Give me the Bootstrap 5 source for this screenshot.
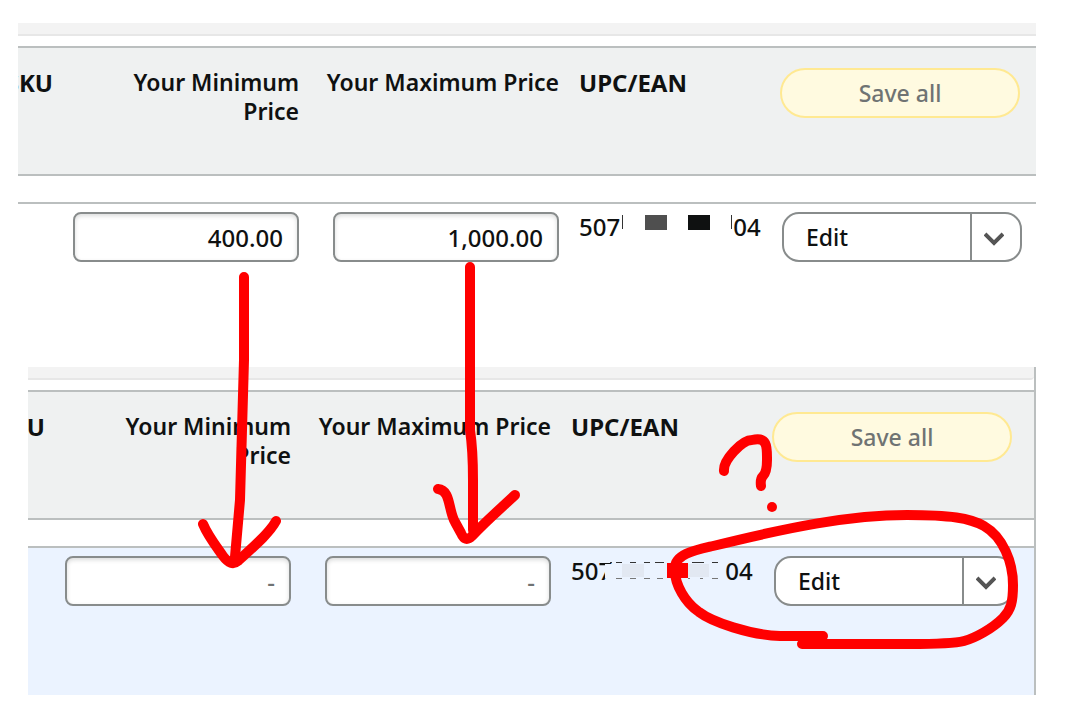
<!DOCTYPE html>
<html lang="en">
<head>
<meta charset="utf-8">
<meta name="viewport" content="width=device-width, initial-scale=1">
<title>Inventory prices</title>
<link href="https://cdn.jsdelivr.net/npm/bootstrap@5.3.0/dist/css/bootstrap.min.css" rel="stylesheet">
<style>
body { background: #fff; color: #0f1111; font-family: "Noto Sans", sans-serif; font-size: 24px; line-height: 29px; }
.stage { padding: 23px 38px 24px 18px; }
.panel-b { margin-left: 10px; border-right: 2px solid #bbbfbf; }
.strip { height: 13px; margin-bottom: 10px; background: #f3f3f3; border-bottom: 2px solid #e7e7e7; }
.panel-b .strip { border-bottom-right-radius: 4px; }
.grid-table { width: 100%; table-layout: fixed; border-collapse: separate; border-spacing: 0; }
.grid-table th, .grid-table td { padding: 8px 10px 0; vertical-align: top; }
.grid-table thead th { height: 130px; padding-top: 20px; background: #eff1f1; border: solid #bbbfbf; border-width: 2px 0; font-weight: 700; }
.grid-table thead th.text-end { font-size: 23px; font-weight: 650; }
.grid-table .spacer td { height: 28px; padding: 0; border-bottom: 2px solid #bbbfbf; }
.panel-a .entry td { height: 163px; }
.panel-b .entry td { height: 147px; background: #ebf3ff; }
.c-min { width: 246px; } .c-max { width: 260px; } .c-upc { width: 203px; }
.panel-a .c-sku { width: 45px; } .panel-b .c-sku { width: 27px; }
.grid-table th:first-child { padding-left: 0; }
.grid-table th:last-child { padding-left: 8px; }
.panel-a th:last-child { padding-right: 16px; } .panel-a td:last-child { padding-right: 14px; }
.panel-b th:last-child { padding-right: 22px; } .panel-b td:last-child { padding-right: 20px; }
.price { width: 226px; height: 50px; padding: 0 14px; border: 2px solid #888c8c; border-radius: 8px; color: #0f1111; font-size: 24px; box-shadow: inset 0 2px 4px #0f111126; }
.price, .save, .split button, .code { font-weight: 500; }
.price::placeholder { color: #6f7373; opacity: 1; }
.save, .save:disabled { height: 50px; padding: 0; border: 2px solid #ffe992; border-radius: 25px; background: #fffae0; color: #6f7373; font-size: 23px; opacity: 1; }
.split { height: 50px; border: 2px solid #888c8c; border-radius: 17px; background: #fff; overflow: hidden; }
.split button { border: 0; background: none; color: #0f1111; font-size: 23px; }
.split .edit { padding: 0 22px; text-align: left; }
.split .more { width: 50px; padding: 0 4px 0 0; border-left: 2px solid #888c8c; }
.marks { pointer-events: none; }
</style>
</head>
<body>
<main class="stage position-relative">
  <section class="panel-a">
    <div class="strip"></div>
    <table class="grid-table">
      <colgroup><col class="c-sku"><col class="c-min"><col class="c-max"><col class="c-upc"><col></colgroup>
      <thead><tr>
        <th scope="col"><div class="d-flex justify-content-end overflow-hidden">SKU</div></th>
        <th scope="col" class="text-end">Your Minimum<br>Price</th>
        <th scope="col" class="text-end text-nowrap">Your Maximum Price</th>
        <th scope="col">UPC/EAN</th>
        <th><button type="button" class="btn save w-100" disabled>Save all</button></th>
      </tr></thead>
      <tbody>
        <tr class="spacer"><td colspan="5"></td></tr>
        <tr class="entry">
          <td></td>
          <td class="text-end"><input class="price text-end" type="text" aria-label="Your Minimum Price" value="400.00"></td>
          <td class="text-end"><input class="price text-end" type="text" aria-label="Your Maximum Price" value="1,000.00"></td>
          <td><div class="code d-flex">507<svg width="113" height="29" viewBox="0 0 113 29" aria-hidden="true"><path fill="#333" d="M2 3h1v14H2zM111 3h1v14h-1z"/><path fill="#4f4f4f" d="M25 3h22v15H25z"/><path fill="#0f1111" d="M68 3h22v15H68z"/></svg>04</div></td>
          <td><div class="split d-flex"><button type="button" class="edit flex-grow-1">Edit</button><button type="button" class="more" aria-label="More actions"><svg width="20" height="14" viewBox="0 0 20 14" fill="none" stroke="#555" stroke-width="4"><path d="M1 2l9 9 9-9"/></svg></button></div></td>
        </tr>
      </tbody>
    </table>
  </section>

  <section class="panel-b">
    <div class="strip"></div>
    <table class="grid-table">
      <colgroup><col class="c-sku"><col class="c-min"><col class="c-max"><col class="c-upc"><col></colgroup>
      <thead><tr>
        <th scope="col"><div class="d-flex justify-content-end overflow-hidden">SKU</div></th>
        <th scope="col" class="text-end">Your Minimum<br>Price</th>
        <th scope="col" class="text-end text-nowrap">Your Maximum Price</th>
        <th scope="col">UPC/EAN</th>
        <th><button type="button" class="btn save w-100" disabled>Save all</button></th>
      </tr></thead>
      <tbody>
        <tr class="spacer"><td colspan="5"></td></tr>
        <tr class="entry">
          <td></td>
          <td class="text-end"><input class="price text-end" type="text" aria-label="Your Minimum Price" placeholder="-"></td>
          <td class="text-end"><input class="price text-end" type="text" aria-label="Your Maximum Price" placeholder="-"></td>
          <td><div class="code d-flex">507<svg class="overflow-visible" width="113" height="29" viewBox="0 0 113 29" aria-hidden="true"><path fill="#ebf3ff" d="M-7 8H113V22H-7z"/><path fill="#e2e8f2" d="M10 8h22v13H10zM76 8h21v13H76z"/><path fill="none" stroke="#333" stroke-width="1" d="M-2 6.500h2M4 6.500h6M18 6.500h6M32 6.500h6M43 6.500h9M80 6.500h12M100 6.500h6"/><path fill="none" stroke="#777" stroke-width="1" d="M4 22.500h6M18 22.500h6M32 22.500h6M45 22.500h6M76 22.500h2M88 22.500h3M100 22.500h6"/></svg>04</div></td>
          <td><div class="split d-flex"><button type="button" class="edit flex-grow-1">Edit</button><button type="button" class="more" aria-label="More actions"><svg width="20" height="14" viewBox="0 0 20 14" fill="none" stroke="#555" stroke-width="4"><path d="M1 2l9 9 9-9"/></svg></button></div></td>
        </tr>
      </tbody>
    </table>
  </section>

  <!-- hand-drawn annotations lying over both tables -->
  <svg class="marks position-absolute top-0 start-0 w-100" viewBox="0 0 1074 720" fill="none" stroke="#f00" stroke-width="10" stroke-linecap="round" stroke-linejoin="round" aria-hidden="true">
    <path d="M244 277V360C243 400 241 450 240 500L235 557"/>
    <path d="M203 524C208 536 216 546 223 556Q231 567 238 561C252 548 269 534 276 521"/>
    <path d="M470 267V430Q473 450 473 480V530"/>
    <path d="M438 489C451 490 448 510 455 522L461 533Q465 543 472 536C486 521 499 510 515 495"/>
    <path d="M724 471C723 460 742 440 752 440C768 436 767 448 767 460Q767 472 763 476Q760 479 761 486"/>
    <circle cx="772" cy="507" r="5" fill="#f00" stroke="none"/>
    <path d="M823 636H780C750 635 712 622 699 612C686 603 674 585 675 568C675 554 696 550 713 546C790 527 850 515 907 515C950 515 970 518 984 526C1003 537 1013 562 1013 585C1013 602 1011 610 1003 618C992 629 975 638 964 641C952 644 930 644 910 644H802"/>
    <path fill="#f00" stroke="none" d="M667 563h21v15h-21z"/>
  </svg>
</main>
<script src="https://cdn.jsdelivr.net/npm/bootstrap@5.3.0/dist/js/bootstrap.bundle.min.js"></script>
</body>
</html>
